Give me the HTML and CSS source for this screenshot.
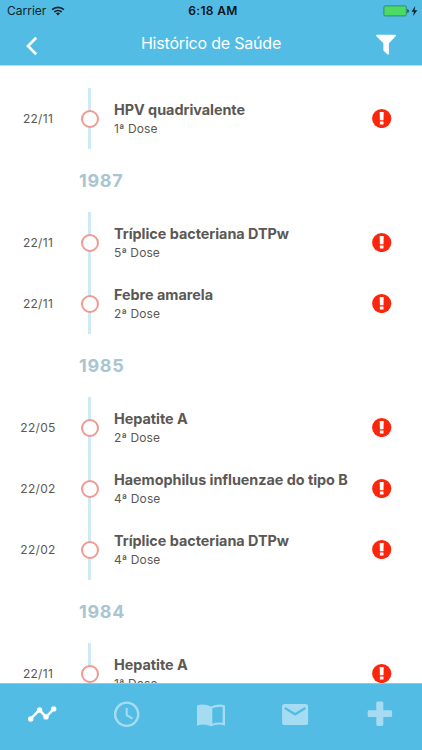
FILE: index.html
```html
<!DOCTYPE html>
<html lang="pt-BR">
<head>
<meta charset="utf-8">
<title>Histórico de Saúde</title>
<link rel="stylesheet" href="styles.css">
</head>
<body>
<svg width="0" height="0" class="defs">
  <symbol id="alert" viewBox="0 0 20 20"><circle cx="9.700" cy="10.500" r="9.600" fill="#fb260b"/><path d="M7.700 3.900h4l-.2 8.400H7.900zM7.900 13.400h3.600v3H7.900z" fill="#fff"/></symbol>
</svg>
<div class="app">
  <header class="header">
    <div class="status">
      <div class="carrier"><span>Carrier</span>
        <svg width="14" height="10" viewBox="0 0 14 10" fill="none" stroke="#10242c" stroke-width="1.7"><path d="M1.1 3.7a8.6 8.6 0 0 1 11.8 0M3.3 6a5.5 5.5 0 0 1 7.4 0"/><path d="M7 9.6 4.9 7.5a3 3 0 0 1 4.2 0z" fill="#10242c" stroke="none"/></svg>
      </div>
      <div class="clock">6:18 AM</div>
      <div class="power">
        <svg width="35" height="12" viewBox="0 0 35 12"><rect x=".9" y=".9" width="22.4" height="10" rx="1.2" fill="#4cd964" stroke="#34877d"/><path d="M24.3 4v4q1.5-.5 1.5-2t-1.5-2z" fill="#173e4b"/><path d="M32.200.9 28.600 6.700h2.300l-.8 4.400 4.200-5.900h-2.700z" fill="#10242c"/></svg>
      </div>
    </div>
    <div class="nav">
      <svg width="12" height="20" viewBox="0 0 12 20" fill="none" stroke="#fff" stroke-width="2.7"><path d="M10.2 1.7 2 10l8.2 8.3"/></svg>
      <h1>Histórico de Saúde</h1>
      <svg width="20" height="21" viewBox="0 0 20 21"><path d="M.7.800h18.800q.9.600.2 1.400L12.900 9.200v10.700q-.4 1.100-1.400.5L7.400 16.500V9.200L.4 2.200Q-.2 1.200.7.800z" fill="#fff"/></svg>
    </div>
  </header>
  <main class="list">
    <article class="row"><time>22/11</time><div class="track"><i></i></div><div class="info"><h3>HPV quadrivalente</h3><p>1ª Dose</p></div><svg class="alert"><use href="#alert"/></svg></article>
    <h2>1987</h2>
    <article class="row"><time>22/11</time><div class="track"><i></i></div><div class="info"><h3>Tríplice bacteriana DTPw</h3><p>5ª Dose</p></div><svg class="alert"><use href="#alert"/></svg></article>
    <article class="row"><time>22/11</time><div class="track"><i></i></div><div class="info"><h3>Febre amarela</h3><p>2ª Dose</p></div><svg class="alert"><use href="#alert"/></svg></article>
    <h2>1985</h2>
    <article class="row"><time>22/05</time><div class="track"><i></i></div><div class="info"><h3>Hepatite A</h3><p>2ª Dose</p></div><svg class="alert"><use href="#alert"/></svg></article>
    <article class="row"><time>22/02</time><div class="track"><i></i></div><div class="info"><h3>Haemophilus influenzae do tipo B</h3><p>4ª Dose</p></div><svg class="alert"><use href="#alert"/></svg></article>
    <article class="row"><time>22/02</time><div class="track"><i></i></div><div class="info"><h3>Tríplice bacteriana DTPw</h3><p>4ª Dose</p></div><svg class="alert"><use href="#alert"/></svg></article>
    <h2>1984</h2>
    <article class="row"><time>22/11</time><div class="track"><i></i></div><div class="info"><h3>Hepatite A</h3><p>1ª Dose</p></div><svg class="alert"><use href="#alert"/></svg></article>
  </main>
  <nav class="tabs">
    <div class="tab active"><svg width="30" height="30" viewBox="0 0 30 30"><path d="m3.700 19 8.700-9.200 6.600 7.200 7.800-8.200" fill="none" stroke="currentColor" stroke-width="2.500"/><g fill="currentColor"><circle cx="3.700" cy="19" r="2.700"/><circle cx="12.600" cy="10" r="2.700"/><circle cx="19" cy="16.900" r="2.700"/><circle cx="26.700" cy="8.900" r="2.700"/></g></svg></div>
    <div class="tab"><svg width="30" height="30" viewBox="0 0 30 30" fill="none" stroke="currentColor"><circle cx="14.700" cy="14.300" r="11.600" stroke-width="2.300"/><path d="M14.700 8.100v7.100l5.700 3.500" stroke-width="2"/></svg></div>
    <div class="tab"><svg width="30" height="30" viewBox="0 0 30 30"><path d="M15 6.600Q8 3 1 5.400v20.300Q8 23.200 15 26.200q7-3 14-.5V5.400Q22 3 15 6.600zM26.700 22.700q-5.200-1-10.400 1.100V8.200q5-2.200 10.400-1.200z" fill="currentColor" fill-rule="evenodd"/></svg></div>
    <div class="tab"><svg width="30" height="30" viewBox="0 0 30 30"><rect x="2.100" y="4" width="26" height="21" rx="2.600" fill="currentColor"/><path d="m4.800 7.900 10.300 6.400 10.300-6.400" fill="none" stroke="#53bce4" stroke-width="2.300"/></svg></div>
    <div class="tab"><svg width="30" height="30" viewBox="0 0 30 30"><path d="M12.700 1.600h4.200q1.400 0 1.400 1.400v7.300h7.400q1.400 0 1.400 1.400v4q0 1.400-1.400 1.400h-7.400v7.400q0 1.400-1.400 1.400h-4.200q-1.400 0-1.400-1.400v-7.400H4.100q-1.400 0-1.400-1.400v-4q0-1.400 1.400-1.400h7.200V3q0-1.400 1.400-1.400z" fill="currentColor"/></svg></div>
  </nav>
</div>
</body>
</html>
```
FILE: styles.css
```css
* { box-sizing: border-box; margin: 0; padding: 0; }
body { background: #fff; font-family: Inter, "Liberation Sans", sans-serif; color: #5b5854; }
svg { display: block; flex: none; }
.defs { position: absolute; }
.app { height: 750px; display: flex; flex-direction: column; overflow: hidden; }
.header { height: 66px; flex: none; background: #53bce4; border-bottom: 1px solid #b2dff1; }
.status { height: 22px; display: grid; grid-template-columns: 1fr auto 1fr; align-items: center; padding: 0 4px 0 7px; color: #10242c; }
.carrier { display: flex; align-items: center; gap: 5px; font-size: 12px; letter-spacing: 0; padding-bottom: 1px; }
.clock { font-size: 12px; font-weight: 600; letter-spacing: .35px; color: #08141a; padding: 0 0 1px 1px; }
.power { justify-self: end; }
.nav { height: 43px; display: grid; grid-template-columns: 60px 1fr 60px; align-items: center; justify-items: center; }
.nav svg { margin-top: 5px; }
.nav svg:last-child { margin: 2px 0 0 -12px; }
.nav svg:first-child { margin-left: 4px; }
h1 { font-size: 16px; font-weight: 400; letter-spacing: -.2px; color: #fff; line-height: 20px; padding-bottom: 1px; }
.list { flex: 1; min-height: 0; overflow: hidden; padding-top: 22px; }
.row { height: 61px; display: grid; grid-template-columns: 76px 27px 1fr 62px; align-items: center; }
time { font-size: 12px; letter-spacing: .3px; text-align: center; }
.track { height: 61px; display: flex; align-items: center; justify-content: center; background: linear-gradient(#cdeaf6, #cdeaf6) center / 3px 100% no-repeat; }
.track i { width: 18px; height: 18px; border: 2px solid #f09a91; border-radius: 50%; background: #fff; }
.info { padding-left: 11px; white-space: nowrap; }
h3 { font-size: 14.4px; font-weight: 650; line-height: 20px; letter-spacing: -.03px; }
.info p { font-size: 12px; line-height: 17px; letter-spacing: .1px; }
.alert { width: 20px; height: 20px; margin-left: 12px; margin-top: -1px; }
h2 { height: 63px; line-height: 63px; padding-left: 79px; font-size: 18px; font-weight: 700; letter-spacing: .7px; color: #a9c5d1; }
.tabs { height: 67px; flex: none; display: grid; grid-template-columns: repeat(5, 1fr); background: #53bce4; border-top: 1px solid #83cdeb; color: #a6dcf1; }
.tab { display: flex; justify-content: center; padding-top: 16px; }
.tab.active { color: #fff; }
```
